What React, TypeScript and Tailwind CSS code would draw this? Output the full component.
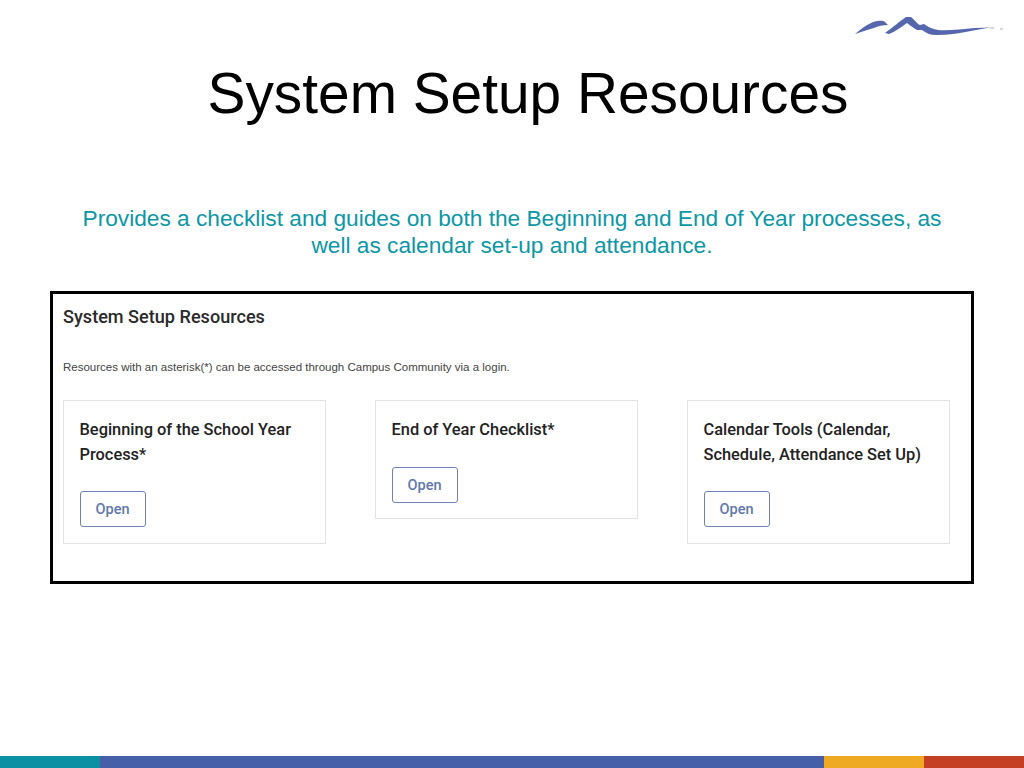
const Card = ({ lines, short }: { lines: string[]; short?: boolean }) => (
  <div className={`w-[263px] border border-[#e3e3e3] bg-white pl-4 pt-[17px] ${short ? "h-[118.5px]" : "h-[143.5px]"}`}>
    <div className="font-['Roboto',sans-serif] text-[16.4px] font-medium leading-[24.5px] text-[#222]">
      {lines.map((l) => (
        <div key={l} className="-ml-[0.5px] whitespace-nowrap">{l}</div>
      ))}
    </div>
    <button className="mt-[24px] flex h-[36px] w-[66px] items-center justify-center rounded-[3px] border border-[#6f84b5] bg-white pr-[1px] pt-[2px] font-['Roboto',sans-serif] text-[14.5px] font-medium text-[#5f78ae]">
      Open
    </button>
  </div>
);

const Logo = () => (
  <svg viewBox="0 0 184 50" className="h-[50px] w-[184px]" aria-hidden="true">
    <path d="M15 34 C21 29 26 25 33 22 C38 21 42 20 45 22 L48 25 C43 25 38 26 34 28 C27 30 21 32 15 34 Z" fill="#5567ad" />
    <path d="M45 33 C52 28 60 21 66 17 L71 17 C75 20 77 24 80 25 L84 24 C88 27 92 29 98 30 C108 31 122 29 135 28 L150 27.5 L136 30 C122 33 108 35 96 35 C90 35 86 33 82 30 L77 30 C73 28 70 25 67 23 C61 27 55 32 49 34 Z" fill="#5567ad" />
    <path d="M150 28 L154 28 M160 29 L163 29" stroke="#a9aec6" strokeWidth="1" fill="none" />
  </svg>
);

export default function App() {
  return (
    <div className="relative flex h-[768px] w-[1024px] flex-col overflow-hidden bg-white font-['Liberation_Sans',sans-serif]">
      <div className="absolute right-0 top-0">
        <Logo />
      </div>
      <h1 className="mt-[61px] pl-8 text-center text-[56.8px] font-normal leading-[66px] text-black">
        System Setup Resources
      </h1>
      <p className="mt-[78px] text-center text-[22.7px] leading-[27px] text-[#0b97a5]">
        Provides a checklist and guides on both the Beginning and End of Year processes, as
        <br />
        well as calendar set-up and attendance.
      </p>
      <div className="ml-[50px] mt-[32px] h-[293px] w-[924px] border-[3px] border-black pl-[10px] pt-[11px]">
        <div className="font-['Roboto',sans-serif] text-[18.1px] font-medium leading-[24px] text-[#2a2a2a]">
          System Setup Resources
        </div>
        <div className="mt-[30px] text-[11.5px] leading-[16px] text-[#444]">
          Resources with an asterisk(*) can be accessed through Campus Community via a login.
        </div>
        <div className="mt-[25px] flex items-start gap-[49px]">
          <Card lines={["Beginning of the School Year", "Process*"]} />
          <Card lines={["End of Year Checklist*"]} short />
          <Card lines={["Calendar Tools (Calendar,", "Schedule, Attendance Set Up)"]} />
        </div>
      </div>
      <div className="mt-auto flex h-[12px] w-full">
        <div className="w-[100px] bg-[#0a8fa3]" />
        <div className="flex-1 bg-[#4560a8]" />
        <div className="w-[100px] bg-[#eeaa22]" />
        <div className="w-[100px] bg-[#c43f23]" />
      </div>
    </div>
  );
}
